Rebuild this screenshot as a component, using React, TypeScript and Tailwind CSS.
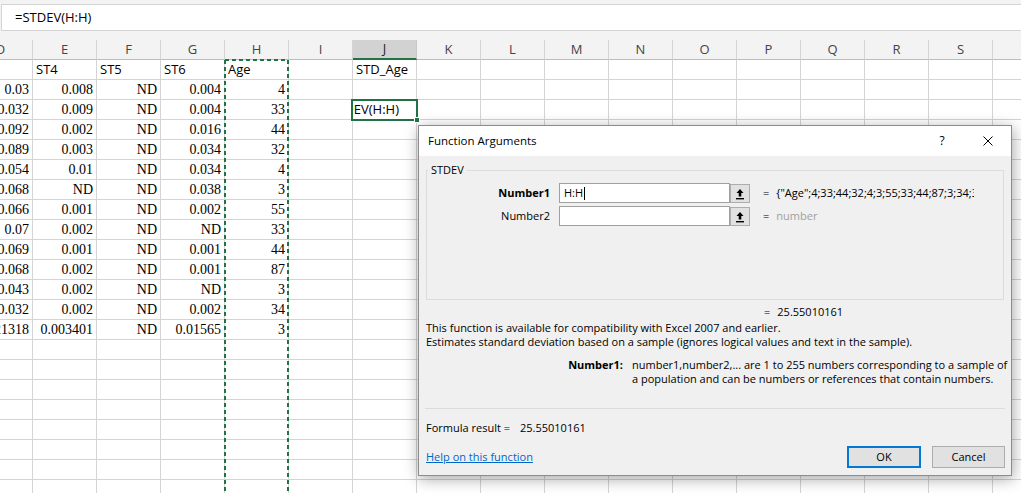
import React from 'react';

const COLS = ['D', 'E', 'F', 'G', 'H', 'I', 'J', 'K', 'L', 'M', 'N', 'O', 'P', 'Q', 'R', 'S', 'T'];
const ND = 'ND';

// values by column, row 0 is the label row
const DATA: Record<string, string[]> = {
    D: ['', '0.03', '0.032', '0.092', '0.089', '0.054', '0.068', '0.066', '0.07', '0.069', '0.068', '0.043', '0.032', '0.021318'],
    E: ['ST4', '0.008', '0.009', '0.002', '0.003', '0.01', ND, '0.001', '0.002', '0.001', '0.002', '0.002', '0.002', '0.003401'],
    F: ['ST5', ND, ND, ND, ND, ND, ND, ND, ND, ND, ND, ND, ND, ND],
    G: ['ST6', '0.004', '0.004', '0.016', '0.034', '0.034', '0.038', '0.002', ND, '0.001', '0.001', ND, '0.002', '0.01565'],
    H: ['Age', '4', '33', '44', '32', '4', '3', '55', '33', '44', '87', '3', '34', '3'],
    J: ['STD_Age'],
};

const ROW_COUNT = 22;

const FormulaBar: React.FC = () => (
    <div className="h-[40px] bg-[#f3f3f3] pt-[4px]">
        <div className="flex h-[27px] items-center border-y border-l border-[#d4d4d4] bg-white pl-[13px] text-[13px] text-black ml-[1px]">
            =STDEV(H:H)
        </div>
    </div>
);

const Cell: React.FC<{ col: string; row: number }> = ({ col, row }) => {
    const value = DATA[col]?.[row] ?? '';
    const base = 'flex h-5 w-16 shrink-0 items-center overflow-hidden whitespace-nowrap border-r border-b border-[#d4d4d4]';

    if (col === 'J' && row === 2) {
        return (
            <div className={`${base} justify-end pr-[17px] text-[13px] text-black`}>=STDEV(H:H)</div>
        );
    }
    if (row === 0) {
        return <div className={`${base} pl-[3px] text-[13px] text-black`}>{value}</div>;
    }
    return (
        <div className={`${base} justify-end pr-[3px] font-['Liberation_Serif',serif] text-[14px] leading-[16px] text-black`}>
            {value}
        </div>
    );
};

const Sheet: React.FC = () => (
    <div className="-ml-[31px] w-[1088px]">
        <div className="flex h-5">
            {COLS.map(c =>
                c === 'J' ? (
                    <div
                        key={c}
                        className="flex h-5 w-16 shrink-0 items-center justify-center border-r border-b-2 border-r-[#c8c8c8] border-b-[#217346] bg-[#d2d2d2] text-[13px] text-[#262626]"
                    >
                        {c}
                    </div>
                ) : (
                    <div
                        key={c}
                        className="flex h-5 w-16 shrink-0 items-center justify-center border-r border-b border-r-[#d4d4d4] border-b-[#bcbcbc] bg-[#f3f3f3] text-[13px] text-[#444]"
                    >
                        {c}
                    </div>
                )
            )}
        </div>
        {Array.from({ length: ROW_COUNT }, (_, r) => (
            <div key={r} className="flex h-5">
                {COLS.map(c => (
                    <Cell key={c} col={c} row={r} />
                ))}
            </div>
        ))}
    </div>
);

const Overlays: React.FC = () => (
    <>
        {/* copy marquee round column H */}
        <svg className="absolute left-[223px] top-[59px]" width="68" height="440">
            <g stroke="#217346" strokeWidth="2" strokeDasharray="4 3" fill="none">
                <line x1="2" y1="1" x2="2" y2="440" />
                <line x1="65" y1="1" x2="65" y2="440" />
                <line x1="2" y1="1" x2="65" y2="1" />
            </g>
        </svg>
        {/* active cell J3 */}
        <div className="absolute left-[351px] top-[99px] h-[22px] w-[67px] border-2 border-[#217346]" />
        <div className="absolute left-[414px] top-[117px] h-[6px] w-[6px] border border-white bg-[#217346]" />
    </>
);

const CollapseIcon: React.FC = () => (
    <svg width="10" height="12" viewBox="0 0 10 12">
        <path d="M5 1 L1.5 5 H3.7 V8.5 H6.3 V5 H8.5 Z" fill="#000" />
        <rect x="1" y="10" width="8" height="1.4" fill="#000" />
    </svg>
);

const ArgRow: React.FC<{ label: string; bold?: boolean; value: React.ReactNode; text?: string }> = ({ label, bold, value, text }) => (
    <div className="flex h-[20px] items-center">
        <div className={`w-[123px] text-right text-[11px] ${bold ? 'font-bold' : ''}`}>{label}</div>
        <div className="ml-[9px] flex h-[20px] w-[171px] items-center border border-[#a0a0a0] bg-white pl-[4px] text-[11px]">
            {text}
            {bold && <span className="ml-[1px] h-[13px] w-px bg-black" />}
        </div>
        <div className="flex h-[19px] w-[20px] items-center justify-center self-end border border-[#adadad] bg-[#e1e1e1]">
            <CollapseIcon />
        </div>
        <span className="ml-[13px] text-[11px]">=</span>
        <div className="ml-[7px] w-[198px] overflow-hidden whitespace-nowrap text-[11px]">{value}</div>
    </div>
);

const FunctionArgumentsDialog: React.FC = () => (
    <div className="absolute left-[418px] top-[125px] h-[351px] w-[594px] border border-[#8c8c8c] bg-[#f0f0f0] text-black shadow-[1px_3px_14px_rgba(0,0,0,0.35)]">
        <div className="flex h-[30px] items-center bg-white">
            <span className="pl-[9px] text-[11.5px]">Function Arguments</span>
            <div className="ml-auto flex h-full">
                <div className="flex w-[46px] items-center justify-center text-[12px]">?</div>
                <div className="flex w-[46px] items-center justify-center">
                    <svg width="10" height="10" viewBox="0 0 10 10">
                        <path d="M0.5 0.5 L9.5 9.5 M9.5 0.5 L0.5 9.5" stroke="#000" strokeWidth="1" />
                    </svg>
                </div>
            </div>
        </div>

        <fieldset className="mx-[7px] mt-[7px] h-[137px] border border-[#dcdcdc] pt-[6px]">
            <legend className="ml-[1px] px-[3px] text-[11px] leading-[14px]">STDEV</legend>
            <div className="flex flex-col gap-[3px]">
                <ArgRow label="Number1" bold text="H:H" value={'{"Age";4;33;44;32;4;3;55;33;44;87;3;34;3;4;3;55}'} />
                <ArgRow label="Number2" value={<span className="text-[#a0a0a0]">number</span>} />
            </div>
        </fieldset>

        <div className="mt-[5px] flex h-[14px] items-center pl-[345px] text-[11px]">
            <span>=</span>
            <span className="ml-[7px]">25.55010161</span>
        </div>

        <div className="mt-[2px] pl-[7px] text-[11px] leading-[14px]">
            <div>This function is available for compatibility with Excel 2007 and earlier.</div>
            <div>Estimates standard deviation based on a sample (ignores logical values and text in the sample).</div>
        </div>

        <div className="mt-[9px] flex text-[11px] leading-[14px]">
            <div className="w-[204px] text-right font-bold">Number1:</div>
            <div className="ml-[9px] whitespace-nowrap">
                number1,number2,... are 1 to 255 numbers corresponding to a sample of
                <br />
                a population and can be numbers or references that contain numbers.
            </div>
        </div>

        <div className="mx-[6px] mt-[22px] h-px bg-[#dcdcdc]" />

        <div className="mt-[12px] flex h-[14px] items-center pl-[7px] text-[11px]">
            <span>Formula result =</span>
            <span className="ml-[10px]">25.55010161</span>
        </div>

        <div className="mt-[11px] flex items-center pl-[7px] pr-[6px] text-[11px]">
            <span className="text-[#0066cc] underline">Help on this function</span>
            <div className="ml-auto flex h-[22px] w-[74px] items-center justify-center border-2 border-[#0078d7] bg-[#e1e1e1]">OK</div>
            <div className="ml-[11px] flex h-[22px] w-[73px] items-center justify-center border border-[#adadad] bg-[#e1e1e1]">Cancel</div>
        </div>
    </div>
);

export default function App() {
    return (
        <div className="relative h-[493px] w-[1021px] overflow-hidden bg-white font-['Open_Sans',sans-serif]">
            <FormulaBar />
            <Sheet />
            <Overlays />
            <FunctionArgumentsDialog />
        </div>
    );
}
